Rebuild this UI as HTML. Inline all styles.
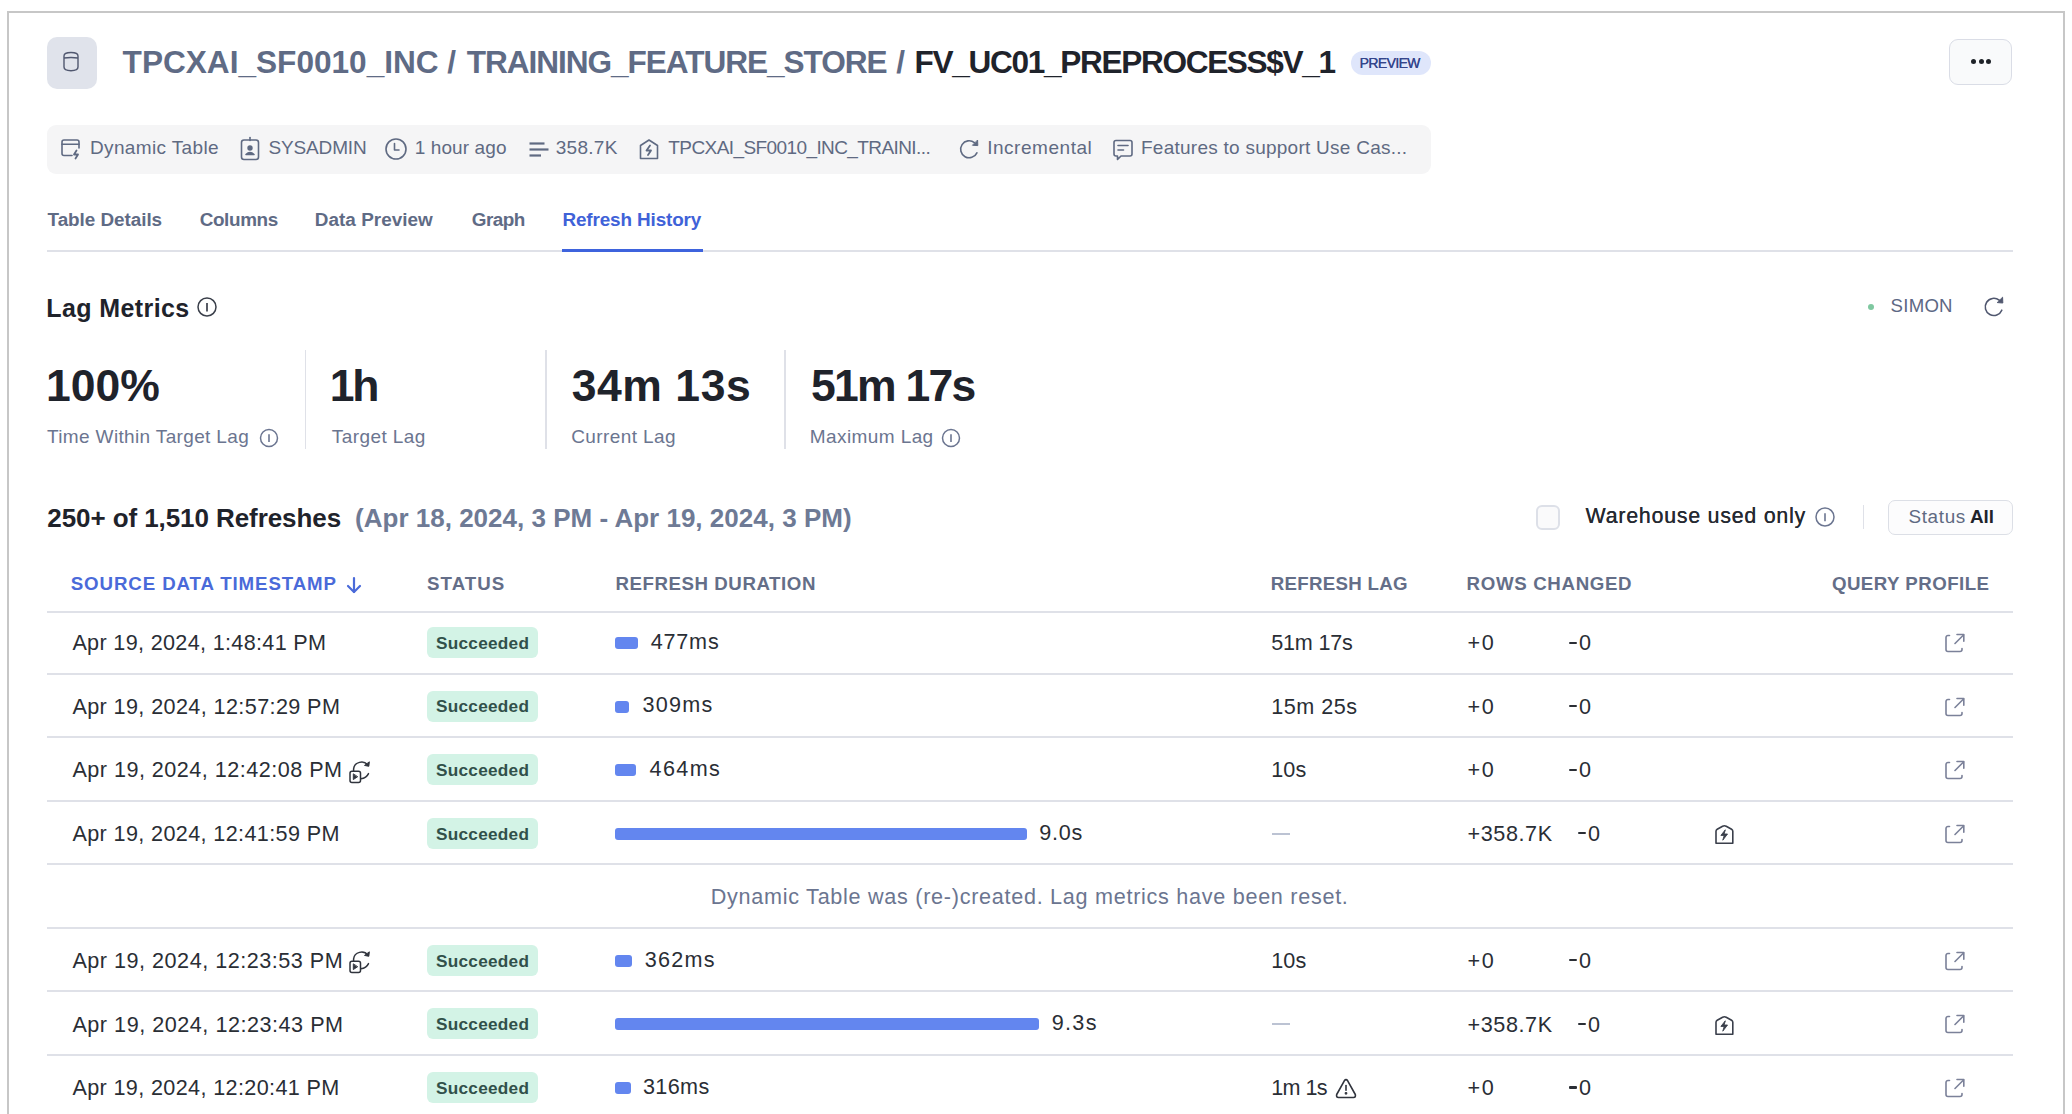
<!DOCTYPE html>
<html><head><meta charset="utf-8"><style>
html,body{margin:0;padding:0;background:#fff;width:2072px;height:1114px;overflow:hidden;position:relative}
.t{position:absolute;white-space:nowrap;line-height:1;font-family:"Liberation Sans",sans-serif}
</style></head><body>

<div style="position:absolute;left:7px;top:11px;width:2054px;height:1200px;border:2px solid #c7c7c7;border-bottom:none"></div>
<div style="position:absolute;left:47px;top:37px;width:50px;height:52px;border-radius:10px;background:#e0e3eb"></div>
<svg style="position:absolute;left:62px;top:51px" width="18" height="21" viewBox="0 0 18 21" fill="none" stroke="#50576f" stroke-width="1.4">
<path d="M2 5Q2 1.5 9 1.5Q16 1.5 16 5V16Q16 19.7 9 19.7Q2 19.7 2 16Z"/><path d="M2 7Q9 6 16 7"/></svg>
<div style="position:absolute;left:1351px;top:51px;width:80px;height:24px;border-radius:12px;background:#dfe6fb"></div>
<div style="position:absolute;left:1948.8px;top:39.2px;width:61px;height:44px;border-radius:9px;border:1.5px solid #dadde6;background:#f9fafb"></div>
<div style="position:absolute;left:1971px;top:59.1px;width:5px;height:5px;border-radius:50%;background:#1f2329"></div>
<div style="position:absolute;left:1978.7px;top:59.1px;width:5px;height:5px;border-radius:50%;background:#1f2329"></div>
<div style="position:absolute;left:1986.4px;top:59.1px;width:5px;height:5px;border-radius:50%;background:#1f2329"></div>
<div style="position:absolute;left:47px;top:125px;width:1384px;height:49px;border-radius:9px;background:#f5f5f6"></div>
<!-- meta icons -->
<svg style="position:absolute;left:60px;top:138px" width="24" height="23" viewBox="0 0 24 23" fill="none" stroke="#5f6a82" stroke-width="1.6" stroke-linecap="round" stroke-linejoin="round">
<path d="M12 17.5H4Q2 17.5 2 15.5V4Q2 2 4 2H17Q19 2 19 4V10"/><path d="M2 6.3H19"/><path d="M16.5 12.5L14 16.5H18L15.5 20.5" stroke-width="1.8"/></svg>
<svg style="position:absolute;left:239px;top:136px" width="22" height="25" viewBox="0 0 22 25" fill="none" stroke="#5f6a82" stroke-width="1.6" stroke-linecap="round" stroke-linejoin="round">
<rect x="2.5" y="4" width="17" height="19.5" rx="2.5"/><path d="M11 1.5V4.5"/><circle cx="11" cy="12" r="1.9" fill="#5f6a82"/><path d="M7 18.5Q11 14.5 15 18.5Z" fill="#5f6a82"/></svg>
<svg style="position:absolute;left:384px;top:137px" width="24" height="24" viewBox="0 0 24 24" fill="none" stroke="#5f6a82" stroke-width="1.6" stroke-linecap="round" stroke-linejoin="round">
<circle cx="12" cy="12" r="10"/><path d="M10.5 6.5V13H15"/></svg>
<svg style="position:absolute;left:528px;top:141px" width="22" height="17" viewBox="0 0 22 17" fill="none" stroke="#5f6a82" stroke-width="2.2" stroke-linecap="butt">
<path d="M1.5 2.5H16.5"/><path d="M1.5 8.5H20.5"/><path d="M1.5 14.5H13"/></svg>
<svg style="position:absolute;left:638px;top:138px" width="22" height="23" viewBox="0 0 22 23" fill="none" stroke="#5f6a82" stroke-width="1.6" stroke-linecap="round" stroke-linejoin="round">
<path d="M2.5 7.5L11 2L19.5 7.5V20.5H2.5Z"/><path d="M12 7.5L8.5 12.5H13L10 17" stroke-width="1.8"/></svg>
<svg style="position:absolute;left:958px;top:138px" width="23" height="23" viewBox="0 0 23 23" fill="none" stroke="#5f6a82" stroke-width="1.6" stroke-linecap="round" stroke-linejoin="round">
<path d="M18.9 14.8A8.5 8.5 0 1 1 16.4 4.6"/><path d="M19.6 2.4L19.8 7.6L14.8 7.3Z" fill="#5f6a82" stroke-width="1"/></svg>
<svg style="position:absolute;left:1112px;top:138px" width="22" height="24" viewBox="0 0 22 24" fill="none" stroke="#5f6a82" stroke-width="1.6" stroke-linecap="round" stroke-linejoin="round">
<path d="M4 2.5H18Q20 2.5 20 4.5V16Q20 18 18 18H9L5.5 21.5V18H4Q2 18 2 16V4.5Q2 2.5 4 2.5Z"/><path d="M6 7.5H16"/><path d="M6 12H11.5"/></svg>
<!-- tab lines -->
<div style="position:absolute;left:47px;top:250px;width:1966px;height:2px;background:#dfe1e8"></div>
<div style="position:absolute;left:562px;top:249px;width:141px;height:3px;background:#3e63dd"></div>
<!-- lag metrics info -->
<svg style="position:absolute;left:196px;top:296px" width="22" height="22" viewBox="0 0 22 22" fill="none" stroke="#3a3f4a" stroke-width="1.5"><circle cx="11" cy="11" r="9"/><path d="M11 7V15.5" stroke-width="1.7"/></svg>
<div style="position:absolute;left:1868.1px;top:304px;width:6.4px;height:6.4px;border-radius:50%;background:#7fc8a0"></div>
<svg style="position:absolute;left:1983px;top:295px" width="23" height="23" viewBox="0 0 23 23" fill="none" stroke="#50576f" stroke-width="1.6" stroke-linecap="round" stroke-linejoin="round">
<path d="M18.8 15.2A8.6 8.6 0 1 1 16.2 5.2"/><path d="M19.6 2.6L19.8 8L14.6 7.6Z" fill="#50576f" stroke-width="1"/></svg>
<!-- dividers -->
<div style="position:absolute;left:304.5px;top:350px;width:1.5px;height:99px;background:#dfe1e8"></div>
<div style="position:absolute;left:545px;top:350px;width:1.5px;height:99px;background:#dfe1e8"></div>
<div style="position:absolute;left:784px;top:350px;width:1.5px;height:99px;background:#dfe1e8"></div>
<svg style="position:absolute;left:258px;top:427px" width="22" height="22" viewBox="0 0 22 22" fill="none" stroke="#6b7590" stroke-width="1.5"><circle cx="11" cy="11" r="8.5"/><path d="M11 7.3V15" stroke-width="1.6"/></svg>
<svg style="position:absolute;left:940px;top:427px" width="22" height="22" viewBox="0 0 22 22" fill="none" stroke="#6b7590" stroke-width="1.5"><circle cx="11" cy="11" r="8.5"/><path d="M11 7.3V15" stroke-width="1.6"/></svg>
<!-- filters -->
<div style="position:absolute;left:1536.3px;top:504.5px;width:20px;height:21.4px;border-radius:6px;border:2px solid #dde0e8;background:#fafafb"></div>
<svg style="position:absolute;left:1814px;top:506px" width="22" height="22" viewBox="0 0 22 22" fill="none" stroke="#6b7590" stroke-width="1.5"><circle cx="11" cy="11" r="9"/><path d="M11 7.3V15.3" stroke-width="1.6"/></svg>
<div style="position:absolute;left:1862.5px;top:505px;width:1.5px;height:24px;background:#dfe1e8"></div>
<div style="position:absolute;left:1888px;top:500px;width:123px;height:33px;border-radius:7px;border:1px solid #dcdfe6;background:#fcfcfd"></div>
<svg style="position:absolute;left:345px;top:576px" width="18" height="18" viewBox="0 0 18 18" fill="none" stroke="#4a6ad9" stroke-width="2.2" stroke-linecap="round" stroke-linejoin="round">
<path d="M9 2V16"/><path d="M3 10L9 16L15 10"/></svg>

<div style="position:absolute;left:47px;top:610.8px;width:1966px;height:2px;background:#dfe1e8"></div><div style="position:absolute;left:47px;top:672.6px;width:1966px;height:2px;background:#dfe1e8"></div><div style="position:absolute;left:47px;top:736.2px;width:1966px;height:2px;background:#dfe1e8"></div><div style="position:absolute;left:47px;top:799.7px;width:1966px;height:2px;background:#dfe1e8"></div><div style="position:absolute;left:47px;top:863.3px;width:1966px;height:2px;background:#dfe1e8"></div><div style="position:absolute;left:47px;top:926.8px;width:1966px;height:2px;background:#dfe1e8"></div><div style="position:absolute;left:47px;top:990.4px;width:1966px;height:2px;background:#dfe1e8"></div><div style="position:absolute;left:47px;top:1053.9px;width:1966px;height:2px;background:#dfe1e8"></div>
<div style="position:absolute;left:1569.4px;top:641.5px;width:7.7px;height:2.2px;border-radius:1px;background:#2a2e35"></div><div style="position:absolute;left:426.6px;top:627.1px;width:111.4px;height:31px;border-radius:6px;background:#d3f3e6"></div><div style="position:absolute;left:615.4px;top:637.0px;width:22.2px;height:12px;border-radius:3px;background:#6386ef"></div><svg style="position:absolute;left:1944px;top:632.0px" width="22" height="22" viewBox="0 0 22 22" fill="none" stroke="#7b8199" stroke-width="1.6" stroke-linecap="round" stroke-linejoin="round"><path d="M5.5 3.5H4A2 2 0 0 0 2 5.5V17.5A2 2 0 0 0 4 19.5H16A2 2 0 0 0 18 17.5V16.5"/><path d="M11 11.5L19.5 3"/><path d="M13 2.5H19.8V9.3"/></svg><div style="position:absolute;left:1569.4px;top:705.1px;width:7.7px;height:2.2px;border-radius:1px;background:#2a2e35"></div><div style="position:absolute;left:426.6px;top:690.7px;width:111.4px;height:31px;border-radius:6px;background:#d3f3e6"></div><div style="position:absolute;left:615.4px;top:700.6px;width:13.7px;height:12px;border-radius:3px;background:#6386ef"></div><svg style="position:absolute;left:1944px;top:695.6px" width="22" height="22" viewBox="0 0 22 22" fill="none" stroke="#7b8199" stroke-width="1.6" stroke-linecap="round" stroke-linejoin="round"><path d="M5.5 3.5H4A2 2 0 0 0 2 5.5V17.5A2 2 0 0 0 4 19.5H16A2 2 0 0 0 18 17.5V16.5"/><path d="M11 11.5L19.5 3"/><path d="M13 2.5H19.8V9.3"/></svg><div style="position:absolute;left:1569.4px;top:768.6px;width:7.7px;height:2.2px;border-radius:1px;background:#2a2e35"></div><div style="position:absolute;left:426.6px;top:754.2px;width:111.4px;height:31px;border-radius:6px;background:#d3f3e6"></div><div style="position:absolute;left:615.4px;top:764.1px;width:20.5px;height:12px;border-radius:3px;background:#6386ef"></div><svg style="position:absolute;left:1944px;top:759.1px" width="22" height="22" viewBox="0 0 22 22" fill="none" stroke="#7b8199" stroke-width="1.6" stroke-linecap="round" stroke-linejoin="round"><path d="M5.5 3.5H4A2 2 0 0 0 2 5.5V17.5A2 2 0 0 0 4 19.5H16A2 2 0 0 0 18 17.5V16.5"/><path d="M11 11.5L19.5 3"/><path d="M13 2.5H19.8V9.3"/></svg><svg style="position:absolute;left:348px;top:758.5px" width="24" height="25" viewBox="0 0 24 25" fill="none" stroke="#30343d" stroke-width="1.5" stroke-linecap="round" stroke-linejoin="round"><rect x="2" y="12.2" width="10.5" height="11.3" rx="2"/><path d="M5.3 15.2V20.6L9.4 17.9Z" fill="#30343d" stroke-width="0.9"/><path d="M5.6 12.2V9.8A8 7.5 0 0 1 20 6.2"/><path d="M21.3 3.2L20.8 7.3L16.9 6.5Z" fill="#30343d" stroke-width="1"/><path d="M12.8 19.8Q18.5 19 20.5 14.6"/></svg><div style="position:absolute;left:1578.1px;top:832.2px;width:7.7px;height:2.2px;border-radius:1px;background:#2a2e35"></div><div style="position:absolute;left:426.6px;top:817.8px;width:111.4px;height:31px;border-radius:6px;background:#d3f3e6"></div><div style="position:absolute;left:615.4px;top:827.7px;width:412.0px;height:12px;border-radius:3px;background:#6386ef"></div><div style="position:absolute;left:1272px;top:832.7px;width:18px;height:2px;background:#bcc3d3"></div><svg style="position:absolute;left:1944px;top:822.7px" width="22" height="22" viewBox="0 0 22 22" fill="none" stroke="#7b8199" stroke-width="1.6" stroke-linecap="round" stroke-linejoin="round"><path d="M5.5 3.5H4A2 2 0 0 0 2 5.5V17.5A2 2 0 0 0 4 19.5H16A2 2 0 0 0 18 17.5V16.5"/><path d="M11 11.5L19.5 3"/><path d="M13 2.5H19.8V9.3"/></svg><svg style="position:absolute;left:1714px;top:823.4px" width="21" height="22" viewBox="0 0 21 22" fill="none" stroke="#3a3f4b" stroke-width="1.6" stroke-linejoin="round"><path d="M2 20.2V8.3Q2 7 3.2 6.3L8.6 3.2Q10.4 2.2 12.2 3.2L17.6 6.3Q18.8 7 18.8 8.3V20.2Z"/><path d="M11.3 6.8L6.9 12.4H10.2L8.8 17.2L13.5 11H10.1Z" fill="#3a3f4b" stroke-width="0.9"/></svg><div style="position:absolute;left:1569.4px;top:959.3px;width:7.7px;height:2.2px;border-radius:1px;background:#2a2e35"></div><div style="position:absolute;left:426.6px;top:944.9px;width:111.4px;height:31px;border-radius:6px;background:#d3f3e6"></div><div style="position:absolute;left:615.4px;top:954.8px;width:17.1px;height:12px;border-radius:3px;background:#6386ef"></div><svg style="position:absolute;left:1944px;top:949.8px" width="22" height="22" viewBox="0 0 22 22" fill="none" stroke="#7b8199" stroke-width="1.6" stroke-linecap="round" stroke-linejoin="round"><path d="M5.5 3.5H4A2 2 0 0 0 2 5.5V17.5A2 2 0 0 0 4 19.5H16A2 2 0 0 0 18 17.5V16.5"/><path d="M11 11.5L19.5 3"/><path d="M13 2.5H19.8V9.3"/></svg><svg style="position:absolute;left:348px;top:949.2px" width="24" height="25" viewBox="0 0 24 25" fill="none" stroke="#30343d" stroke-width="1.5" stroke-linecap="round" stroke-linejoin="round"><rect x="2" y="12.2" width="10.5" height="11.3" rx="2"/><path d="M5.3 15.2V20.6L9.4 17.9Z" fill="#30343d" stroke-width="0.9"/><path d="M5.6 12.2V9.8A8 7.5 0 0 1 20 6.2"/><path d="M21.3 3.2L20.8 7.3L16.9 6.5Z" fill="#30343d" stroke-width="1"/><path d="M12.8 19.8Q18.5 19 20.5 14.6"/></svg><div style="position:absolute;left:1578.1px;top:1022.8px;width:7.7px;height:2.2px;border-radius:1px;background:#2a2e35"></div><div style="position:absolute;left:426.6px;top:1008.4px;width:111.4px;height:31px;border-radius:6px;background:#d3f3e6"></div><div style="position:absolute;left:615.4px;top:1018.3px;width:424.0px;height:12px;border-radius:3px;background:#6386ef"></div><div style="position:absolute;left:1272px;top:1023.3px;width:18px;height:2px;background:#bcc3d3"></div><svg style="position:absolute;left:1944px;top:1013.3px" width="22" height="22" viewBox="0 0 22 22" fill="none" stroke="#7b8199" stroke-width="1.6" stroke-linecap="round" stroke-linejoin="round"><path d="M5.5 3.5H4A2 2 0 0 0 2 5.5V17.5A2 2 0 0 0 4 19.5H16A2 2 0 0 0 18 17.5V16.5"/><path d="M11 11.5L19.5 3"/><path d="M13 2.5H19.8V9.3"/></svg><svg style="position:absolute;left:1714px;top:1014.0px" width="21" height="22" viewBox="0 0 21 22" fill="none" stroke="#3a3f4b" stroke-width="1.6" stroke-linejoin="round"><path d="M2 20.2V8.3Q2 7 3.2 6.3L8.6 3.2Q10.4 2.2 12.2 3.2L17.6 6.3Q18.8 7 18.8 8.3V20.2Z"/><path d="M11.3 6.8L6.9 12.4H10.2L8.8 17.2L13.5 11H10.1Z" fill="#3a3f4b" stroke-width="0.9"/></svg><div style="position:absolute;left:1569.4px;top:1086.4px;width:7.7px;height:2.2px;border-radius:1px;background:#2a2e35"></div><div style="position:absolute;left:426.6px;top:1072.0px;width:111.4px;height:31px;border-radius:6px;background:#d3f3e6"></div><div style="position:absolute;left:615.4px;top:1081.9px;width:15.5px;height:12px;border-radius:3px;background:#6386ef"></div><svg style="position:absolute;left:1944px;top:1076.9px" width="22" height="22" viewBox="0 0 22 22" fill="none" stroke="#7b8199" stroke-width="1.6" stroke-linecap="round" stroke-linejoin="round"><path d="M5.5 3.5H4A2 2 0 0 0 2 5.5V17.5A2 2 0 0 0 4 19.5H16A2 2 0 0 0 18 17.5V16.5"/><path d="M11 11.5L19.5 3"/><path d="M13 2.5H19.8V9.3"/></svg><svg style="position:absolute;left:1335px;top:1077.9px" width="22" height="21" viewBox="0 0 22 21" fill="none" stroke="#30343d" stroke-width="1.6" stroke-linejoin="round"><path d="M9.3 2.8Q11 0.5 12.7 2.8L20.3 16.5Q21 19.5 18.5 19.5H3.5Q1 19.5 1.7 16.5Z"/><path d="M11 7.5V12.3" stroke-linecap="round"/><circle cx="11" cy="15.3" r="0.6" fill="#30343d"/></svg>
<div id="title0" class="t" style="left:122.60px;top:47.31px;font-size:31.60px;font-weight:bold;color:#5f6b85;letter-spacing:0.000px;">TPCXAI_SF0010_INC</div><div id="title1" class="t" style="left:447.30px;top:47.31px;font-size:31.60px;font-weight:bold;color:#5f6b85;letter-spacing:0.000px;">/</div><div id="title2" class="t" style="left:466.70px;top:47.31px;font-size:31.60px;font-weight:bold;color:#5f6b85;letter-spacing:-1.048px;">TRAINING_FEATURE_STORE</div><div id="title3" class="t" style="left:896.30px;top:47.31px;font-size:31.60px;font-weight:bold;color:#5f6b85;letter-spacing:0.000px;">/</div><div id="title4" class="t" style="left:914.60px;top:47.31px;font-size:31.60px;font-weight:bold;color:#1f232b;letter-spacing:-1.333px;">FV_UC01_PREPROCESS$V_1</div><div id="preview" class="t" style="left:1359.56px;top:55.90px;font-size:14.00px;font-weight:normal;color:#34458c;letter-spacing:-0.633px;text-shadow:0.25px 0 0 #34458c;">PREVIEW</div><div id="meta0" class="t" style="left:89.96px;top:138.01px;font-size:19.00px;font-weight:normal;color:#5f6a82;letter-spacing:0.367px;">Dynamic Table</div><div id="meta1" class="t" style="left:268.46px;top:138.01px;font-size:19.00px;font-weight:normal;color:#5f6a82;letter-spacing:-0.143px;">SYSADMIN</div><div id="meta2" class="t" style="left:414.66px;top:138.01px;font-size:19.00px;font-weight:normal;color:#5f6a82;letter-spacing:0.111px;">1 hour ago</div><div id="meta3" class="t" style="left:555.76px;top:138.01px;font-size:19.00px;font-weight:normal;color:#5f6a82;letter-spacing:0.280px;">358.7K</div><div id="meta4" class="t" style="left:668.36px;top:138.01px;font-size:19.00px;font-weight:normal;color:#5f6a82;letter-spacing:-0.592px;">TPCXAI_SF0010_INC_TRAINI...</div><div id="meta5" class="t" style="left:987.16px;top:138.01px;font-size:19.00px;font-weight:normal;color:#5f6a82;letter-spacing:0.540px;">Incremental</div><div id="meta6" class="t" style="left:1140.96px;top:138.01px;font-size:19.00px;font-weight:normal;color:#5f6a82;letter-spacing:0.255px;">Features to support Use Cas...</div><div id="tab0" class="t" style="left:47.57px;top:211.00px;font-size:18.90px;font-weight:bold;color:#5f6b85;letter-spacing:-0.050px;">Table Details</div><div id="tab1" class="t" style="left:199.67px;top:211.00px;font-size:18.90px;font-weight:bold;color:#5f6b85;letter-spacing:-0.367px;">Columns</div><div id="tab2" class="t" style="left:314.87px;top:211.00px;font-size:18.90px;font-weight:bold;color:#5f6b85;letter-spacing:0.018px;">Data Preview</div><div id="tab3" class="t" style="left:471.77px;top:211.00px;font-size:18.90px;font-weight:bold;color:#5f6b85;letter-spacing:-0.550px;">Graph</div><div id="tab4" class="t" style="left:562.47px;top:211.00px;font-size:18.90px;font-weight:bold;color:#3f62d8;letter-spacing:-0.129px;">Refresh History</div><div id="lagm" class="t" style="left:46.30px;top:295.91px;font-size:25.00px;font-weight:bold;color:#1f232b;letter-spacing:0.400px;">Lag Metrics</div><div id="simon" class="t" style="left:1890.58px;top:296.81px;font-size:18.60px;font-weight:normal;color:#5d6884;letter-spacing:0.250px;">SIMON</div><div id="val0" class="t" style="left:45.93px;top:364.40px;font-size:44.50px;font-weight:bold;color:#1f232b;letter-spacing:0.000px;">100%</div><div id="val1" class="t" style="left:329.73px;top:364.40px;font-size:44.50px;font-weight:bold;color:#1f232b;letter-spacing:-2.200px;">1h</div><div id="val2" class="t" style="left:571.63px;top:364.40px;font-size:44.50px;font-weight:bold;color:#1f232b;letter-spacing:0.567px;">34m 13s</div><div id="val3" class="t" style="left:811.03px;top:364.40px;font-size:44.50px;font-weight:bold;color:#1f232b;letter-spacing:-1.733px;">51m 17s</div><div id="lab0" class="t" style="left:47.06px;top:426.61px;font-size:19.00px;font-weight:normal;color:#6b7590;letter-spacing:0.352px;">Time Within Target Lag</div><div id="lab1" class="t" style="left:331.76px;top:426.61px;font-size:19.00px;font-weight:normal;color:#6b7590;letter-spacing:0.422px;">Target Lag</div><div id="lab2" class="t" style="left:571.16px;top:426.61px;font-size:19.00px;font-weight:normal;color:#6b7590;letter-spacing:0.400px;">Current Lag</div><div id="lab3" class="t" style="left:809.86px;top:426.61px;font-size:19.00px;font-weight:normal;color:#6b7590;letter-spacing:0.400px;">Maximum Lag</div><div id="refr" class="t" style="left:47.34px;top:504.91px;font-size:26.00px;font-weight:bold;color:#1f232b;letter-spacing:-0.082px;">250+ of 1,510 Refreshes</div><div id="range" class="t" style="left:355.04px;top:504.91px;font-size:26.00px;font-weight:bold;color:#6e7a95;letter-spacing:0.010px;">(Apr 18, 2024, 3 PM - Apr 19, 2024, 3 PM)</div><div id="wh" class="t" style="left:1585.53px;top:505.20px;font-size:21.20px;font-weight:normal;color:#262a32;letter-spacing:0.856px;text-shadow:0.35px 0 0 #262a32;">Warehouse used only</div><div id="status" class="t" style="left:1908.47px;top:508.20px;font-size:18.90px;font-weight:normal;color:#5f6a82;letter-spacing:0.640px;">Status</div><div id="all" class="t" style="left:1969.97px;top:508.20px;font-size:18.90px;font-weight:bold;color:#1f232b;letter-spacing:-0.100px;">All</div><div id="hdr0" class="t" style="left:70.78px;top:575.30px;font-size:18.70px;font-weight:bold;color:#4a6ad9;letter-spacing:0.890px;">SOURCE DATA TIMESTAMP</div><div id="hdr1" class="t" style="left:427.08px;top:575.30px;font-size:18.70px;font-weight:bold;color:#646e88;letter-spacing:1.040px;">STATUS</div><div id="hdr2" class="t" style="left:615.48px;top:575.30px;font-size:18.70px;font-weight:bold;color:#646e88;letter-spacing:0.547px;">REFRESH DURATION</div><div id="hdr3" class="t" style="left:1270.78px;top:575.30px;font-size:18.70px;font-weight:bold;color:#646e88;letter-spacing:0.280px;">REFRESH LAG</div><div id="hdr4" class="t" style="left:1466.58px;top:575.30px;font-size:18.70px;font-weight:bold;color:#646e88;letter-spacing:0.655px;">ROWS CHANGED</div><div id="hdr5" class="t" style="left:1831.88px;top:575.30px;font-size:18.70px;font-weight:bold;color:#646e88;letter-spacing:0.467px;">QUERY PROFILE</div><div id="date0" class="t" style="left:72.40px;top:632.21px;font-size:21.60px;font-weight:normal;color:#2a2e35;letter-spacing:0.330px;">Apr 19, 2024, 1:48:41 PM</div><div id="succ0" class="t" style="left:435.97px;top:634.81px;font-size:17.20px;font-weight:bold;color:#31504a;letter-spacing:0.275px;">Succeeded</div><div id="dur0" class="t" style="left:650.70px;top:630.81px;font-size:21.60px;font-weight:normal;color:#2a2e35;letter-spacing:0.800px;">477ms</div><div id="lag0" class="t" style="left:1271.20px;top:632.21px;font-size:21.60px;font-weight:normal;color:#2a2e35;letter-spacing:-0.200px;">51m 17s</div><div id="plus0" class="t" style="left:1467.60px;top:632.21px;font-size:21.60px;font-weight:normal;color:#2a2e35;letter-spacing:1.600px;">+0</div><div id="minus0" class="t" style="left:1579.10px;top:632.21px;font-size:21.60px;font-weight:normal;color:#2a2e35;letter-spacing:0.000px;">0</div><div id="date1" class="t" style="left:72.40px;top:695.82px;font-size:21.60px;font-weight:normal;color:#2a2e35;letter-spacing:0.392px;">Apr 19, 2024, 12:57:29 PM</div><div id="succ1" class="t" style="left:435.97px;top:698.41px;font-size:17.20px;font-weight:bold;color:#31504a;letter-spacing:0.275px;">Succeeded</div><div id="dur1" class="t" style="left:642.60px;top:694.40px;font-size:21.60px;font-weight:normal;color:#2a2e35;letter-spacing:1.250px;">309ms</div><div id="lag1" class="t" style="left:1271.20px;top:695.82px;font-size:21.60px;font-weight:normal;color:#2a2e35;letter-spacing:0.500px;">15m 25s</div><div id="plus1" class="t" style="left:1467.60px;top:695.82px;font-size:21.60px;font-weight:normal;color:#2a2e35;letter-spacing:1.600px;">+0</div><div id="minus1" class="t" style="left:1579.10px;top:695.81px;font-size:21.60px;font-weight:normal;color:#2a2e35;letter-spacing:0.000px;">0</div><div id="date2" class="t" style="left:72.40px;top:759.30px;font-size:21.60px;font-weight:normal;color:#2a2e35;letter-spacing:0.483px;">Apr 19, 2024, 12:42:08 PM</div><div id="succ2" class="t" style="left:435.97px;top:761.91px;font-size:17.20px;font-weight:bold;color:#31504a;letter-spacing:0.275px;">Succeeded</div><div id="dur2" class="t" style="left:649.60px;top:757.91px;font-size:21.60px;font-weight:normal;color:#2a2e35;letter-spacing:1.350px;">464ms</div><div id="lag2" class="t" style="left:1271.20px;top:759.30px;font-size:21.60px;font-weight:normal;color:#2a2e35;letter-spacing:0.100px;">10s</div><div id="plus2" class="t" style="left:1467.60px;top:759.30px;font-size:21.60px;font-weight:normal;color:#2a2e35;letter-spacing:1.600px;">+0</div><div id="minus2" class="t" style="left:1579.10px;top:759.31px;font-size:21.60px;font-weight:normal;color:#2a2e35;letter-spacing:0.000px;">0</div><div id="date3" class="t" style="left:72.40px;top:822.90px;font-size:21.60px;font-weight:normal;color:#2a2e35;letter-spacing:0.375px;">Apr 19, 2024, 12:41:59 PM</div><div id="succ3" class="t" style="left:435.97px;top:825.50px;font-size:17.20px;font-weight:bold;color:#31504a;letter-spacing:0.275px;">Succeeded</div><div id="dur3" class="t" style="left:1039.30px;top:821.51px;font-size:21.60px;font-weight:normal;color:#2a2e35;letter-spacing:0.733px;">9.0s</div><div id="plus3" class="t" style="left:1467.60px;top:822.90px;font-size:21.60px;font-weight:normal;color:#2a2e35;letter-spacing:0.567px;">+358.7K</div><div id="minus3" class="t" style="left:1587.90px;top:822.91px;font-size:21.60px;font-weight:normal;color:#2a2e35;letter-spacing:0.000px;">0</div><div id="msg" class="t" style="left:710.80px;top:886.32px;font-size:21.60px;font-weight:normal;color:#6b7590;letter-spacing:0.715px;">Dynamic Table was (re-)created. Lag metrics have been reset.</div><div id="date5" class="t" style="left:72.40px;top:950.01px;font-size:21.60px;font-weight:normal;color:#2a2e35;letter-spacing:0.508px;">Apr 19, 2024, 12:23:53 PM</div><div id="succ5" class="t" style="left:435.97px;top:952.60px;font-size:17.20px;font-weight:bold;color:#31504a;letter-spacing:0.275px;">Succeeded</div><div id="dur5" class="t" style="left:644.80px;top:948.61px;font-size:21.60px;font-weight:normal;color:#2a2e35;letter-spacing:1.250px;">362ms</div><div id="lag5" class="t" style="left:1271.20px;top:950.01px;font-size:21.60px;font-weight:normal;color:#2a2e35;letter-spacing:0.100px;">10s</div><div id="plus5" class="t" style="left:1467.60px;top:950.01px;font-size:21.60px;font-weight:normal;color:#2a2e35;letter-spacing:1.600px;">+0</div><div id="minus5" class="t" style="left:1579.10px;top:950.01px;font-size:21.60px;font-weight:normal;color:#2a2e35;letter-spacing:0.000px;">0</div><div id="date6" class="t" style="left:72.40px;top:1013.51px;font-size:21.60px;font-weight:normal;color:#2a2e35;letter-spacing:0.525px;">Apr 19, 2024, 12:23:43 PM</div><div id="succ6" class="t" style="left:435.97px;top:1016.10px;font-size:17.20px;font-weight:bold;color:#31504a;letter-spacing:0.275px;">Succeeded</div><div id="dur6" class="t" style="left:1051.70px;top:1012.10px;font-size:21.60px;font-weight:normal;color:#2a2e35;letter-spacing:1.333px;">9.3s</div><div id="plus6" class="t" style="left:1467.60px;top:1013.51px;font-size:21.60px;font-weight:normal;color:#2a2e35;letter-spacing:0.567px;">+358.7K</div><div id="minus6" class="t" style="left:1587.90px;top:1013.50px;font-size:21.60px;font-weight:normal;color:#2a2e35;letter-spacing:0.000px;">0</div><div id="date7" class="t" style="left:72.40px;top:1077.11px;font-size:21.60px;font-weight:normal;color:#2a2e35;letter-spacing:0.367px;">Apr 19, 2024, 12:20:41 PM</div><div id="succ7" class="t" style="left:435.97px;top:1079.72px;font-size:17.20px;font-weight:bold;color:#31504a;letter-spacing:0.275px;">Succeeded</div><div id="dur7" class="t" style="left:642.90px;top:1075.71px;font-size:21.60px;font-weight:normal;color:#2a2e35;letter-spacing:0.400px;">316ms</div><div id="lag7" class="t" style="left:1271.20px;top:1077.11px;font-size:21.60px;font-weight:normal;color:#2a2e35;letter-spacing:-0.600px;">1m 1s</div><div id="plus7" class="t" style="left:1467.60px;top:1077.11px;font-size:21.60px;font-weight:normal;color:#2a2e35;letter-spacing:1.600px;">+0</div><div id="minus7" class="t" style="left:1579.10px;top:1077.10px;font-size:21.60px;font-weight:normal;color:#2a2e35;letter-spacing:0.000px;">0</div>
</body></html>
